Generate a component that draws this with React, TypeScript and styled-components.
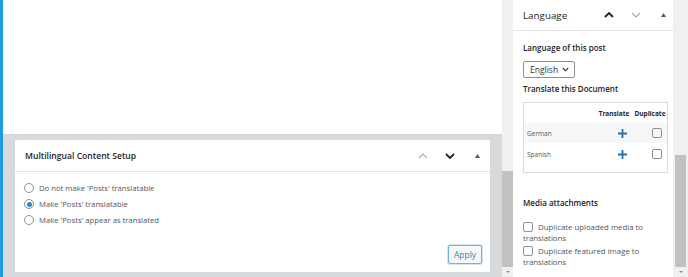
import React from 'react';
import styled, { createGlobalStyle } from 'styled-components';

const GlobalStyle = createGlobalStyle`
	html, body {
		margin: 0;
		padding: 0;
		background: #ffffff;
	}
	* {
		box-sizing: border-box;
	}
`;

const Page = styled.div`
	display: flex;
	width: 688px;
	height: 277px;
	overflow: hidden;
	font-family: "Open Sans", "Noto Sans", sans-serif;
	color: #3c434a;
`;

const Main = styled.div`
	width: 502px;
	display: flex;
	flex-direction: column;
	border-left: 3px solid #1d9ce0;
`;

const Canvas = styled.div`
	height: 134px;
	background: #ffffff;
`;

const MetaArea = styled.div`
	flex: 1;
	background: #d7dadd;
	padding: 6px 12px 5px 12px;
`;

const Panel = styled.section`
	height: 132px;
	background: #ffffff;
	display: flex;
	flex-direction: column;
`;

const PanelHeader = styled.header<{ $height: number; $right: number }>`
	height: ${p => p.$height}px;
	display: flex;
	align-items: center;
	padding-left: 10px;
	padding-right: ${p => p.$right}px;
	border-bottom: 1px solid #e2e4e7;
`;

const PanelTitle = styled.h2<{ $weight: number; $size: number }>`
	flex: 1;
	margin: 0;
	font-size: ${p => p.$size}px;
	font-weight: ${p => p.$weight};
	color: #1d2327;
`;

const HeaderActions = styled.div`
	display: flex;
	align-items: center;
	gap: 7px;
`;

const HeaderButton = styled.span`
	width: 20px;
	height: 20px;
	display: flex;
	align-items: center;
	justify-content: center;
`;

const PanelBody = styled.div`
	flex: 1;
	display: flex;
	flex-direction: column;
	padding: 10px 8px 8px 9px;
`;

const RadioList = styled.div`
	flex: 1;
	display: flex;
	flex-direction: column;
	gap: 4px;
`;

const RadioRow = styled.label`
	display: flex;
	align-items: center;
	gap: 5px;
	height: 12px;
	font-size: 7.7px;
	color: #50575e;
`;

const RadioCircle = styled.span<{ $checked?: boolean }>`
	width: 10px;
	height: 10px;
	border-radius: 50%;
	border: 1px solid #8c8f94;
	display: flex;
	align-items: center;
	justify-content: center;
	&::after {
		content: '';
		width: 5px;
		height: 5px;
		border-radius: 50%;
		background: ${p => (p.$checked ? '#3582c4' : 'transparent')};
	}
`;

const Footer = styled.div`
	display: flex;
	justify-content: flex-end;
`;

const ApplyButton = styled.button`
	width: 34px;
	height: 19px;
	padding: 0;
	font-family: inherit;
	font-size: 8.5px;
	color: #3582c4;
	background: #f6f7f7;
	border: 1px solid #72aee6;
	border-radius: 2px;
	box-shadow: 0 0 0 1px #d5e4f2;
`;

const Scrollbar = styled.div<{ $width: number }>`
	width: ${p => p.$width}px;
	display: flex;
	flex-direction: column;
	background: #f0f0f1;
`;

const ScrollSpacer = styled.div<{ $height: number }>`
	height: ${p => p.$height}px;
`;

const ScrollThumb = styled.div<{ $inset: number }>`
	flex: 1;
	margin: 0 ${p => p.$inset}px;
	background: #c1c1c1;
`;

const ScrollArrow = styled.div`
	height: 10px;
	display: flex;
	align-items: center;
	justify-content: center;
	&::after {
		content: '';
		border-left: 2px solid transparent;
		border-right: 2px solid transparent;
		border-top: 2px solid #8c8f94;
	}
`;

const Sidebar = styled.aside`
	width: 160px;
	background: #ffffff;
	display: flex;
	flex-direction: column;
`;

const SidebarBody = styled.div`
	display: flex;
	flex-direction: column;
	padding: 10px 5px 0 10px;
`;

const Label = styled.div<{ $top?: number }>`
	margin-top: ${p => p.$top || 0}px;
	font-size: 8px;
	font-weight: 600;
	color: #1d2327;
	line-height: 14px;
`;

const SelectBox = styled.div`
	margin-top: 6px;
	width: 52px;
	height: 17px;
	display: flex;
	align-items: center;
	justify-content: space-between;
	padding: 0 5px 0 6px;
	border: 1px solid #8c8f94;
	border-radius: 2px;
	font-size: 8.5px;
	color: #2c3338;
`;

const LangTable = styled.div`
	margin-top: 6px;
	height: 71px;
	border: 1px solid #dcdcde;
	display: flex;
	flex-direction: column;
`;

const TableRow = styled.div<{ $shaded?: boolean; $height: number }>`
	height: ${p => p.$height}px;
	display: grid;
	grid-template-columns: 1fr 38px 34px;
	align-items: center;
	padding-left: 3px;
	background: ${p => (p.$shaded ? '#f6f7f7' : 'transparent')};
	font-size: 6.5px;
	color: #50575e;
`;

const ColHead = styled.span`
	font-weight: 700;
	color: #1d2327;
	font-size: 6.5px;
	text-align: center;
`;

const Cell = styled.span<{ $shift: number }>`
	display: flex;
	justify-content: center;
	padding-left: ${p => p.$shift}px;
`;

const Box = styled.span`
	width: 10px;
	height: 10px;
	border: 1px solid #8c8f94;
	border-radius: 2px;
	display: inline-block;
	flex-shrink: 0;
`;

const CheckLine = styled.div<{ $top?: number }>`
	margin-top: ${p => p.$top || 0}px;
	display: flex;
	flex-direction: column;
	font-size: 7.8px;
	color: #50575e;
	line-height: 11px;
`;

const CheckFirst = styled.span`
	height: 12px;
	display: flex;
	align-items: center;
	gap: 5px;
`;

const ChevronUp = ({ dark }: { dark?: boolean }) => (
	<svg width="10" height="6" viewBox="0 0 10 6">
		<path d="M1 5 L5 1 L9 5" fill="none" stroke={dark ? '#1d2327' : '#a7aaad'} strokeWidth={dark ? 1.8 : 1.1} />
	</svg>
);

const ChevronDown = ({ dark }: { dark?: boolean }) => (
	<svg width="10" height="6" viewBox="0 0 10 6">
		<path d="M1 1 L5 5 L9 1" fill="none" stroke={dark ? '#1d2327' : '#a7aaad'} strokeWidth={dark ? 1.8 : 1.1} />
	</svg>
);

const SelectChevron = () => (
	<svg width="7" height="5" viewBox="0 0 7 5">
		<path d="M0.8 1 L3.5 3.8 L6.2 1" fill="none" stroke="#2c3338" strokeWidth="1.1" />
	</svg>
);

const Caret = () => (
	<svg width="5" height="4" viewBox="0 0 5 4">
		<path d="M0 4 L2.5 0 L5 4 Z" fill="#50575e" />
	</svg>
);

const Plus = () => (
	<svg width="9" height="9" viewBox="0 0 9 9">
		<path d="M4.5 0 V9 M0 4.5 H9" stroke="#2271b1" strokeWidth="1.8" />
	</svg>
);

const options = [
	{ label: "Do not make 'Posts' translatable", checked: false },
	{ label: "Make 'Posts' translatable", checked: true },
	{ label: "Make 'Posts' appear as translated", checked: false },
];

export default function App() {
	return (
		<>
			<GlobalStyle />
			<Page>
				<Main>
					<Canvas />
					<MetaArea>
						<Panel>
							<PanelHeader $height={32} $right={3}>
								<PanelTitle $weight={600} $size={8.6}>Multilingual Content Setup</PanelTitle>
								<HeaderActions>
									<HeaderButton><ChevronUp /></HeaderButton>
									<HeaderButton><ChevronDown dark /></HeaderButton>
									<HeaderButton><Caret /></HeaderButton>
								</HeaderActions>
							</PanelHeader>
							<PanelBody>
								<RadioList>
									{options.map(o => (
										<RadioRow key={o.label}>
											<RadioCircle $checked={o.checked} />
											{o.label}
										</RadioRow>
									))}
								</RadioList>
								<Footer>
									<ApplyButton>Apply</ApplyButton>
								</Footer>
							</PanelBody>
						</Panel>
					</MetaArea>
				</Main>
				<Scrollbar $width={11}>
					<ScrollSpacer $height={171} />
					<ScrollThumb $inset={0} />
					<ScrollArrow />
				</Scrollbar>
				<Sidebar>
					<PanelHeader $height={31} $right={0}>
						<PanelTitle $weight={400} $size={9.8}>Language</PanelTitle>
						<HeaderActions>
							<HeaderButton><ChevronUp dark /></HeaderButton>
							<HeaderButton><ChevronDown /></HeaderButton>
							<HeaderButton><Caret /></HeaderButton>
						</HeaderActions>
					</PanelHeader>
					<SidebarBody>
						<Label>Language of this post</Label>
						<SelectBox>English <SelectChevron /></SelectBox>
						<Label $top={4}>Translate this Document</Label>
						<LangTable>
							<TableRow $height={20}>
								<span />
								<ColHead>Translate</ColHead>
								<ColHead>Duplicate</ColHead>
							</TableRow>
							<TableRow $height={20} $shaded>
								<span>German</span>
								<Cell $shift={16}><Plus /></Cell>
								<Cell $shift={14}><Box /></Cell>
							</TableRow>
							<TableRow $height={22}>
								<span>Spanish</span>
								<Cell $shift={16}><Plus /></Cell>
								<Cell $shift={14}><Box /></Cell>
							</TableRow>
						</LangTable>
						<Label $top={23}>Media attachments</Label>
						<CheckLine $top={11}>
							<CheckFirst><Box />Duplicate uploaded media to</CheckFirst>
							translations
						</CheckLine>
						<CheckLine $top={1}>
							<CheckFirst><Box />Duplicate featured image to</CheckFirst>
							translations
						</CheckLine>
					</SidebarBody>
				</Sidebar>
				<Scrollbar $width={15}>
					<ScrollSpacer $height={155} />
					<ScrollThumb $inset={2} />
					<ScrollArrow />
				</Scrollbar>
			</Page>
		</>
	);
}
